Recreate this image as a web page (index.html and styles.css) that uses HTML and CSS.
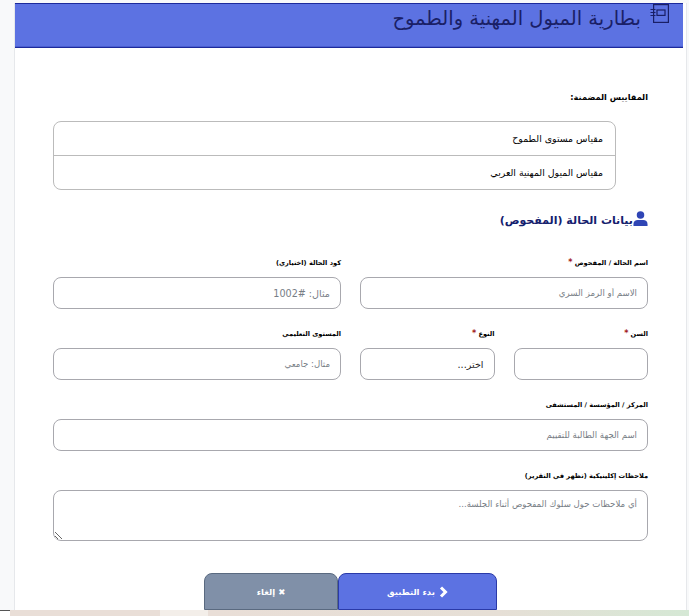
FILE: index.html
```html
<!DOCTYPE html>
<html lang="ar" dir="rtl">
<head>
    <meta charset="UTF-8">
    <meta name="viewport" content="width=device-width, initial-scale=1.0">
    <title>بطارية الميول المهنية والطموح</title>
    <link rel="stylesheet" href="styles.css">
</head>
<body>
    <div class="page">
        <main class="card">
            <header class="card-header">
                <svg class="header-icon" viewBox="0 0 19 19" width="19" height="19" fill="none" stroke="#1a1f66" stroke-width="1.2">
                    <rect x="3.6" y="0.6" width="14.8" height="17.8"/>
                    <rect x="7" y="6" width="8" height="5.4"/>
                    <path d="M0.5 5.5h5M0.5 8.5h5M0.5 11.5h5"/>
                </svg>
                <h1>بطارية الميول المهنية والطموح</h1>
            </header>

            <div class="card-body">
                <h2 class="scales-title">المقاييس المضمنة:</h2>
                <ul class="scales">
                    <li>مقياس مستوى الطموح</li>
                    <li>مقياس الميول المهنية العربي</li>
                </ul>

                <h3 class="section-title">
                    <svg viewBox="0 0 16 16" width="15" height="15" fill="#2f45b5">
                        <circle cx="8" cy="4.2" r="4"/>
                        <path d="M0.5 16v-2.2c0-2.6 2-4.3 4.5-4.3h6c2.500 0 4.500 1.700 4.500 4.300V16z"/>
                    </svg>
                    <span>بيانات الحالة (المفحوص)</span>
                </h3>

                <form class="form-grid">
                    <div class="field span-2">
                        <label>اسم الحالة / المفحوص <span class="req">*</span></label>
                        <input type="text" placeholder="الاسم أو الرمز السري">
                    </div>
                    <div class="field span-2">
                        <label>كود الحالة (اختياري)</label>
                        <input type="text" class="code-input" placeholder="مثال: #1002">
                    </div>
                    <div class="field">
                        <label>السن <span class="req">*</span></label>
                        <input type="text">
                    </div>
                    <div class="field">
                        <label>النوع <span class="req">*</span></label>
                        <select>
                            <option>اختر...</option>
                        </select>
                    </div>
                    <div class="field span-2">
                        <label>المستوى التعليمي</label>
                        <input type="text" placeholder="مثال: جامعي">
                    </div>
                    <div class="field span-4">
                        <label>المركز / المؤسسة / المستشفى</label>
                        <input type="text" placeholder="اسم الجهة الطالبة للتقييم">
                    </div>
                    <div class="field span-4">
                        <label>ملاحظات إكلينيكية (تظهر في التقرير)</label>
                        <textarea placeholder="أي ملاحظات حول سلوك المفحوص أثناء الجلسة..."></textarea>
                    </div>
                </form>

                <div class="actions">
                    <button type="button" class="btn btn-primary">
                        <svg viewBox="0 0 10 12" width="10" height="12" fill="none" stroke="#fff" stroke-width="3"><path d="M3 1.500L7.500 6 3 10.500"/></svg>
                        بدء التطبيق
                    </button>
                    <button type="button" class="btn btn-muted">✖ إلغاء</button>
                </div>
            </div>
        </main>
        <div class="strip"></div>
    </div>
</body>
</html>
```

FILE: styles.css
```css
* {
    box-sizing: border-box;
}

body {
    margin: 0;
    background-color: #f8f9fa;
    font-family: "DejaVu Sans", "Liberation Sans", sans-serif;
    color: #000;
}

.page {
    width: 689px;
    height: 616px;
    overflow: hidden;
    display: flex;
    flex-direction: column;
    padding-top: 3px;
}

.card {
    height: 607px;
    width: 673px;
    margin-right: 2px;
    background-color: #fff;
    border-left: 1px solid #e6e8eb;
    border-right: 1px solid #e6e8eb;
}

.card-header {
    height: 45px;
    margin-right: 3px;
    background-color: #5c72e2;
    border: 1px solid #1c2a9c;
    border-width: 1px 0;
    box-shadow: inset 0 -1px 0 #4a5ed0;
    display: flex;
    align-items: flex-start;
    gap: 9px;
    padding-right: 14px;
}

.header-icon {
    flex: none;
}

.card-header h1 {
    margin: 0;
    font-size: 19.5px;
    font-weight: normal;
    line-height: 30px;
    color: #1a1f66;
}

.card-body {
    padding: 42px 38px 0 0;
    width: 633px;
}

.scales-title {
    margin: 0 0 17px;
    font-size: 8.2px;
    line-height: 14px;
    font-weight: bold;
}

.scales {
    list-style: none;
    margin: 0;
    padding: 0;
    width: 563px;
    margin-right: 32px;
    border: 1px solid #bbb;
    border-radius: 8px;
}

.scales li {
    height: 33px;
    padding: 0 12px;
    font-size: 9.4px;
    line-height: 33px;
}

.scales li + li {
    height: 34px;
    border-top: 1px solid #bbb;
}

.section-title {
    margin: 20px 0 22px;
    display: flex;
    align-items: center;
    font-size: 11px;
    line-height: 22px;
    font-weight: bold;
    color: #14206e;
}

.section-title svg {
    margin-bottom: 6px;
}

.form-grid {
    display: grid;
    grid-template-columns: repeat(4, 1fr);
    gap: 16px 19px;
    width: 595px;
}

.span-2 {
    grid-column: span 2;
}

.span-4 {
    grid-column: span 4;
}

.field label {
    display: block;
    height: 15px;
    margin-bottom: 8px;
    font-size: 6.6px;
    line-height: 18px;
    font-weight: bold;
}

.req {
    color: #a01818;
    font-size: 8px;
}

.field input,
.field select,
.field textarea {
    display: block;
    width: 100%;
    height: 32px;
    padding: 0 10px;
    font-family: inherit;
    font-size: 8.6px;
    color: #222;
    background-color: #fff;
    border: 1px solid #a8a8ae;
    border-radius: 8px;
    appearance: none;
}

.field select {
    font-size: 9.6px;
}

.field .code-input {
    font-size: 9.6px;
}

.field textarea {
    height: 51px;
    padding-top: 8px;
}

.field ::placeholder {
    color: #777d85;
    opacity: 1;
}

.actions {
    display: flex;
    justify-content: center;
    margin-top: 32px;
}

.btn {
    height: 37px;
    font-family: inherit;
    font-size: 8.5px;
    font-weight: bold;
    color: #fff;
    border-radius: 8px 8px 0 0;
    border: 1px solid #2a3aa8;
}

.btn svg {
    vertical-align: middle;
}

.btn-primary {
    width: 159px;
    background-color: #5c72e2;
}

.btn-muted {
    width: 134px;
    background-color: #8090a8;
    border-color: #5a6a80;
}

.strip {
    height: 6px;
    flex: none;
    background:
        linear-gradient(#555, #555) 0 0 / 10px 1px no-repeat,
        linear-gradient(to right, #fff 10px, #e9ded7 10px, #e9ded7 160px, #f3eee9 160px, #f3eee9 208px, #e9ded7 208px, #e6dfd6 500px, #d5e8d5 689px);
}
```
